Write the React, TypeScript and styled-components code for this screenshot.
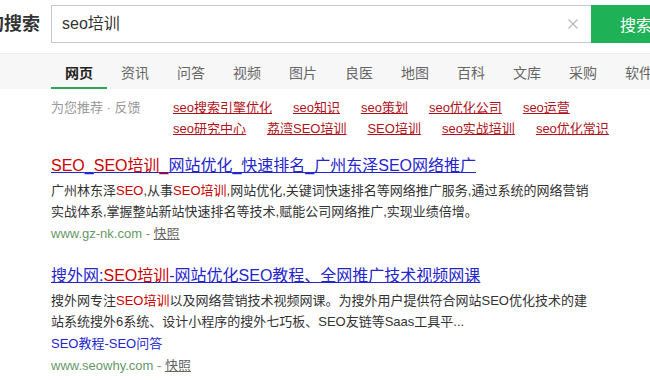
import React from "react";
import styled, { createGlobalStyle } from "styled-components";

const Global = createGlobalStyle`
  html, body { margin: 0; padding: 0; background: #fff; }
  body {
    width: 650px; height: 380px; overflow: hidden;
    font-family: "Liberation Sans", Arial, "Noto Sans CJK SC", sans-serif;
    color: #333;
  }
`;

const Page = styled.div`
  width: 650px;
  height: 380px;
  overflow: hidden;
`;

const Header = styled.header`
  display: flex;
  align-items: flex-start;
  height: 54px;
  box-sizing: border-box;
  padding-top: 5px;
  border-bottom: 1px solid #ececec;
  background: #fff;
`;

const Logo = styled.div`
  display: flex;
  justify-content: flex-end;
  flex: 0 0 40px;
  width: 40px;
  overflow: hidden;
  white-space: nowrap;
  margin-right: 11px;
  height: 38px;
  line-height: 38px;
  font-size: 18px;
  font-weight: bold;
  color: #333;
`;

const SearchBox = styled.div`
  display: flex;
  align-items: center;
  flex: 0 0 540px;
  height: 38px;
  box-sizing: border-box;
  border: 1px solid #c8c8c8;
  border-right: none;
  padding-left: 10px;
`;

const Query = styled.span`
  flex: 1;
  font-size: 16px;
  color: #333;
  line-height: 36px;
`;

const ClearIcon = styled.svg`
  width: 10px;
  height: 10px;
  margin-right: 13px;
`;

const SearchButton = styled.button`
  flex: 0 0 100px;
  height: 38px;
  border: none;
  background: #1fb155;
  color: #fff;
  font-family: inherit;
  font-size: 16px;
  text-align: left;
  padding: 0 0 0 29px;
`;

const TabBar = styled.nav`
  display: flex;
  height: 35px;
  background: #f7f7f7;
  padding-left: 51px;
  white-space: nowrap;
`;

const Tab = styled.div<{ $active?: boolean }>`
  flex: 0 0 auto;
  display: flex;
  align-items: center;
  box-sizing: border-box;
  height: 35px;
  padding: 2px 14px 0;
  font-size: 14px;
  color: ${(p) => (p.$active ? "#222" : "#666")};
  font-weight: ${(p) => (p.$active ? "bold" : "normal")};
  border-bottom: 2px solid ${(p) => (p.$active ? "#2ca556" : "transparent")};
`;

const Recommend = styled.div`
  display: flex;
  padding: 8px 0 0 51px;
  font-size: 13px;
  line-height: 21px;
`;

const RecLabel = styled.div`
  flex: 0 0 122px;
  color: #999;
  white-space: nowrap;
`;

const RecLinks = styled.div`
  display: flex;
  flex-direction: column;
`;

const RecRow = styled.div`
  display: flex;
  gap: 21px;
  white-space: nowrap;
`;

const RecLink = styled.a`
  color: #b0121b;
  text-decoration: underline;
`;

const Results = styled.main`
  padding: 15px 0 0 51px;
  display: flex;
  flex-direction: column;
  gap: 20px;
`;

const Result = styled.div`
  display: flex;
  flex-direction: column;
`;

const Title = styled.a`
  font-size: 16px;
  line-height: 24px;
  color: #2525cc;
  text-decoration: underline;
  margin-bottom: 2px;
  white-space: nowrap;
`;

const Em = styled.em`
  font-style: normal;
  color: #c00;
`;

const Desc = styled.div`
  width: 542px;
  font-size: 13px;
  line-height: 21px;
  color: #333;
`;

const SiteLinks = styled.a`
  font-size: 13px;
  line-height: 21px;
  margin-top: 1px;
  color: #2525cc;
  text-decoration: none;
`;

const UrlLine = styled.div<{ $gap?: number }>`
  font-size: 13px;
  line-height: 21px;
  margin-top: ${(p) => p.$gap ?? 0}px;
  color: #888;
`;

const Url = styled.span`
  color: #669966;
`;

const Snapshot = styled.a`
  color: #666;
  text-decoration: underline;
`;

const tabs = ["网页", "资讯", "问答", "视频", "图片", "良医", "地图", "百科", "文库", "采购", "软件"];

const recRows = [
  ["seo搜索引擎优化", "seo知识", "seo策划", "seo优化公司", "seo运营"],
  ["seo研究中心", "荔湾SEO培训", "SEO培训", "seo实战培训", "seo优化常识"],
];

export default function App() {
  return (
    <Page>
      <Global />
      <Header>
        <Logo>搜狗搜索</Logo>
        <SearchBox>
          <Query>seo培训</Query>
          <ClearIcon viewBox="0 0 10 10">
            <path d="M0.5 0.5 L9.5 9.5 M9.5 0.5 L0.5 9.5" stroke="#b5b5b5" strokeWidth="1.1" fill="none" />
          </ClearIcon>
        </SearchBox>
        <SearchButton>搜索</SearchButton>
      </Header>
      <TabBar>
        {tabs.map((t, i) => (
          <Tab key={t} $active={i === 0}>
            {t}
          </Tab>
        ))}
      </TabBar>
      <Recommend>
        <RecLabel>为您推荐 · 反馈</RecLabel>
        <RecLinks>
          {recRows.map((row, r) => (
            <RecRow key={r}>
              {row.map((l) => (
                <RecLink key={l}>{l}</RecLink>
              ))}
            </RecRow>
          ))}
        </RecLinks>
      </Recommend>
      <Results>
        <Result>
          <Title>
            <Em>SEO</Em>_<Em>SEO培训_</Em>网站优化_快速排名_广州东泽SEO网络推广
          </Title>
          <Desc>
            广州林东泽<Em>SEO</Em>,从事<Em>SEO培训</Em>,网站优化,关键词快速排名等网络推广服务,通过系统的网络营销实战体系,掌握整站新站快速排名等技术,赋能公司网络推广,实现业绩倍增。
          </Desc>
          <UrlLine $gap={1}>
            <Url>www.gz-nk.com</Url> - <Snapshot>快照</Snapshot>
          </UrlLine>
        </Result>
        <Result>
          <Title>
            搜外网:<Em>SEO培训</Em>-网站优化SEO教程、全网推广技术视频网课
          </Title>
          <Desc>
            搜外网专注<Em>SEO培训</Em>以及网络营销技术视频网课。为搜外用户提供符合网站SEO优化技术的建站系统搜外6系统、设计小程序的搜外七巧板、SEO友链等Saas工具平...
          </Desc>
          <SiteLinks>SEO教程-SEO问答</SiteLinks>
          <UrlLine $gap={1}>
            <Url>www.seowhy.com</Url> - <Snapshot>快照</Snapshot>
          </UrlLine>
        </Result>
      </Results>
    </Page>
  );
}
